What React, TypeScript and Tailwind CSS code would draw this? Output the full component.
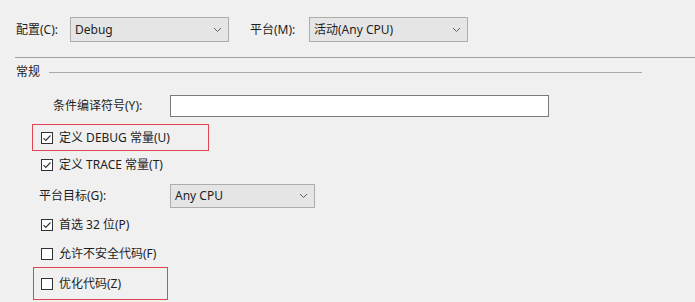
import React from "react";

const FONT = {
  fontFamily: '"Noto Sans", "Noto Sans CJK SC", sans-serif',
};

const Chevron = () => (
  <svg width="9" height="6" viewBox="0 0 9 6" className="shrink-0">
    <polyline
      points="1,1 4.5,4.5 8,1"
      fill="none"
      stroke="#606060"
      strokeWidth="1"
    />
  </svg>
);

const Select = ({ value, w }: { value: string; w: string }) => (
  <div
    className={`${w} h-full flex items-center justify-between pl-[4px] pr-[6px] bg-[#e5e5e5] border border-[#adadad]`}
  >
    <span>{value}</span>
    <Chevron />
  </div>
);

const Check = ({ on }: { on: boolean }) => (
  <svg width="12" height="12" viewBox="0 0 12 12" className="shrink-0">
    <rect x="0.5" y="0.5" width="11" height="11" fill="#ffffff" stroke="#333333" />
    {on && (
      <polyline
        points="2.5,6.2 4.8,8.5 9.5,3.5"
        fill="none"
        stroke="#333333"
        strokeWidth="1.1"
      />
    )}
  </svg>
);

const CheckRow = ({
  on,
  label,
  h,
}: {
  on: boolean;
  label: string;
  h: string;
}) => (
  <div className={`${h} flex items-center gap-[6px] pl-[41px]`}>
    <Check on={on} />
    <span>{label}</span>
  </div>
);

// red annotation frame around a checkbox row
const Marked = ({ label, on, cls }: { label: string; on: boolean; cls: string }) => (
  <div className={`${cls} border border-[#e04553] flex items-center gap-[6px]`}>
    <Check on={on} />
    <span>{label}</span>
  </div>
);

export default function App() {
  return (
    <div
      className="w-[695px] h-[302px] bg-[#f0f0f0] text-[#1e1e1e] text-[12px] leading-none overflow-hidden"
      style={FONT}
    >
      <div className="pt-[17px] h-[42px] flex items-stretch">
        <div className="w-[70px] pl-[16px] flex items-center">配置(C):</div>
        <Select value="Debug" w="w-[159px]" />
        <div className="w-[80px] pl-[21px] flex items-center">平台(M):</div>
        <Select value="活动(Any CPU)" w="w-[159px]" />
      </div>

      <div className="mt-[15px] ml-[15px] h-px bg-[#a0a0a0]" />

      <div className="mt-[6px] h-[16px] flex items-center">
        <span className="pl-[16px] w-[49px]">常规</span>
        <div className="w-[593px] h-px bg-[#a8a8a8]" />
      </div>

      <div className="mt-[15px] h-[22px] flex items-stretch">
        <div className="w-[170px] pl-[53px] flex items-center">条件编译符号(Y):</div>
        <div className="w-[379px] bg-white border border-[#7a7a7a]" />
      </div>

      <Marked on label="定义 DEBUG 常量(U)" cls="mt-[7px] ml-[32px] w-[177px] h-[27px] pl-[8px]" />

      <CheckRow on label="定义 TRACE 常量(T)" h="h-[27px]" />

      <div className="mt-[6px] h-[24px] flex items-stretch">
        <div className="w-[170px] pl-[39px] flex items-center">平台目标(G):</div>
        <Select value="Any CPU" w="w-[145px]" />
      </div>

      <div className="mt-[3px]">
        <CheckRow on label="首选 32 位(P)" h="h-[27px]" />
      </div>
      <div className="mt-[3px]">
        <CheckRow on={false} label="允许不安全代码(F)" h="h-[26px]" />
      </div>

      <Marked on={false} label="优化代码(Z)" cls="ml-[33px] w-[135px] h-[33px] pl-[7px]" />
    </div>
  );
}
